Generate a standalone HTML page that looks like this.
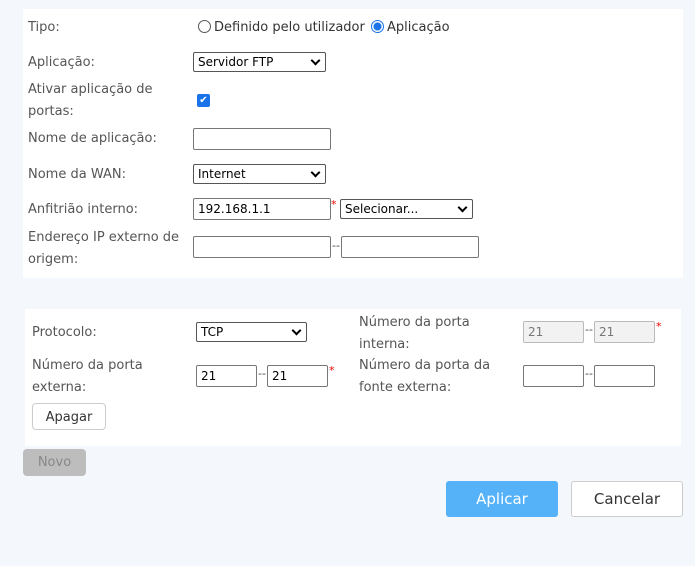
<!DOCTYPE html>
<html><head><meta charset="utf-8"><style>
body{margin:0;width:695px;height:566px;background:#f4f7fc;font-family:"DejaVu Sans","Liberation Sans",sans-serif;font-size:13px;color:#555;position:relative;overflow:hidden}
.a{position:absolute}
.p{position:absolute;background:#fff}
.l{position:absolute;line-height:22px;margin-top:1px}
.in{position:absolute;height:20px;border:1px solid #777;border-radius:2px;background:#fff;box-sizing:border-box;font-size:12px;color:#000;padding-left:4px;line-height:18px}
.sel{position:absolute;height:20px;border:1px solid #555;border-radius:2px;background:#fff;box-sizing:border-box;font-size:12px;color:#000;padding-left:4px;line-height:18px}
.sel:after{content:"";position:absolute;right:6px;top:4px;width:5px;height:5px;border-right:2px solid #000;border-bottom:2px solid #000;transform:rotate(45deg)}
.dis{background:#f2f2f2;border-color:#bbb;color:#777}
.st{position:absolute;color:#e00;font-size:11px}
.dash{position:absolute;color:#444;font-size:11px}
</style></head><body>
<div class="p" style="left:23px;top:9px;width:660px;height:269px"></div>
<div class="l" style="left:28px;top:16px">Tipo:</div>
<div class="a" style="left:198px;top:20px;width:11px;height:11px;border:1px solid #555;border-radius:50%"></div>
<div class="l" style="left:214px;top:16px;color:#333">Definido pelo utilizador</div>
<div class="a" style="left:371px;top:20px;width:11px;height:11px;border:1px solid #1a73e8;border-radius:50%;background:radial-gradient(circle,#1a73e8 3.5px,#fff 4.5px)"></div>
<div class="l" style="left:387px;top:16px;color:#333">Aplicação</div>
<div class="l" style="left:28px;top:51px">Aplicação:</div>
<div class="sel" style="left:193px;top:52px;width:133px">Servidor FTP</div>
<div class="l" style="left:28px;top:78px">Ativar aplicação de</div>
<div class="l" style="left:28px;top:100px">portas:</div>
<div class="a" style="left:197px;top:94px;width:13px;height:13px;background:#1a73e8;border-radius:2px;color:#fff;font-size:10px;line-height:13px;text-align:center">✔</div>
<div class="l" style="left:28px;top:127px">Nome de aplicação:</div>
<div class="in" style="left:193px;top:128px;width:138px;height:22px"></div>
<div class="l" style="left:28px;top:163px">Nome da WAN:</div>
<div class="sel" style="left:193px;top:164px;width:133px">Internet</div>
<div class="l" style="left:28px;top:198px">Anfitrião interno:</div>
<div class="in" style="left:193px;top:198px;width:138px;height:22px;line-height:20px">192.168.1.1</div>
<div class="st" style="left:331px;top:198px">*</div>
<div class="sel" style="left:340px;top:199px;width:133px">Selecionar...</div>
<div class="l" style="left:28px;top:226px">Endereço IP externo de</div>
<div class="l" style="left:28px;top:248px">origem:</div>
<div class="in" style="left:193px;top:236px;width:138px;height:22px"></div>
<div class="dash" style="left:332px;top:239px">--</div>
<div class="in" style="left:341px;top:236px;width:138px;height:22px"></div>

<div class="p" style="left:25px;top:309px;width:656px;height:137px"></div>
<div class="l" style="left:32px;top:321px">Protocolo:</div>
<div class="sel" style="left:196px;top:322px;width:111px">TCP</div>
<div class="l" style="left:359px;top:311px">Número da porta</div>
<div class="l" style="left:359px;top:333px">interna:</div>
<div class="in dis" style="left:523px;top:321px;width:61px;height:22px;line-height:20px">21</div>
<div class="dash" style="left:585px;top:323px">--</div>
<div class="in dis" style="left:594px;top:321px;width:61px;height:22px;line-height:20px">21</div>
<div class="st" style="left:656px;top:320px">*</div>
<div class="l" style="left:32px;top:354px">Número da porta</div>
<div class="l" style="left:32px;top:376px">externa:</div>
<div class="in" style="left:196px;top:365px;width:61px;height:22px;line-height:20px">21</div>
<div class="dash" style="left:258px;top:367px">--</div>
<div class="in" style="left:267px;top:365px;width:61px;height:22px;line-height:20px">21</div>
<div class="st" style="left:329px;top:364px">*</div>
<div class="l" style="left:359px;top:354px">Número da porta da</div>
<div class="l" style="left:359px;top:376px">fonte externa:</div>
<div class="in" style="left:523px;top:365px;width:61px;height:22px"></div>
<div class="dash" style="left:585px;top:367px">--</div>
<div class="in" style="left:594px;top:365px;width:61px;height:22px"></div>
<div class="a" style="left:32px;top:403px;width:74px;height:27px;border:1px solid #ccc;border-radius:4px;box-sizing:border-box;text-align:center;line-height:27px;color:#333">Apagar</div>
<div class="a" style="left:23px;top:449px;width:63px;height:27px;background:#bdbdbd;border-radius:4px;text-align:center;line-height:28px;color:#888">Novo</div>
<div class="a" style="left:446px;top:481px;width:112px;height:36px;background:#56b2f8;border-radius:3px;text-align:center;line-height:37px;color:#fff;font-size:15px">Aplicar</div>
<div class="a" style="left:571px;top:481px;width:112px;height:36px;background:#fff;border:1px solid #ccc;border-radius:3px;box-sizing:border-box;text-align:center;line-height:35px;color:#333;font-size:15px">Cancelar</div>
</body></html>
